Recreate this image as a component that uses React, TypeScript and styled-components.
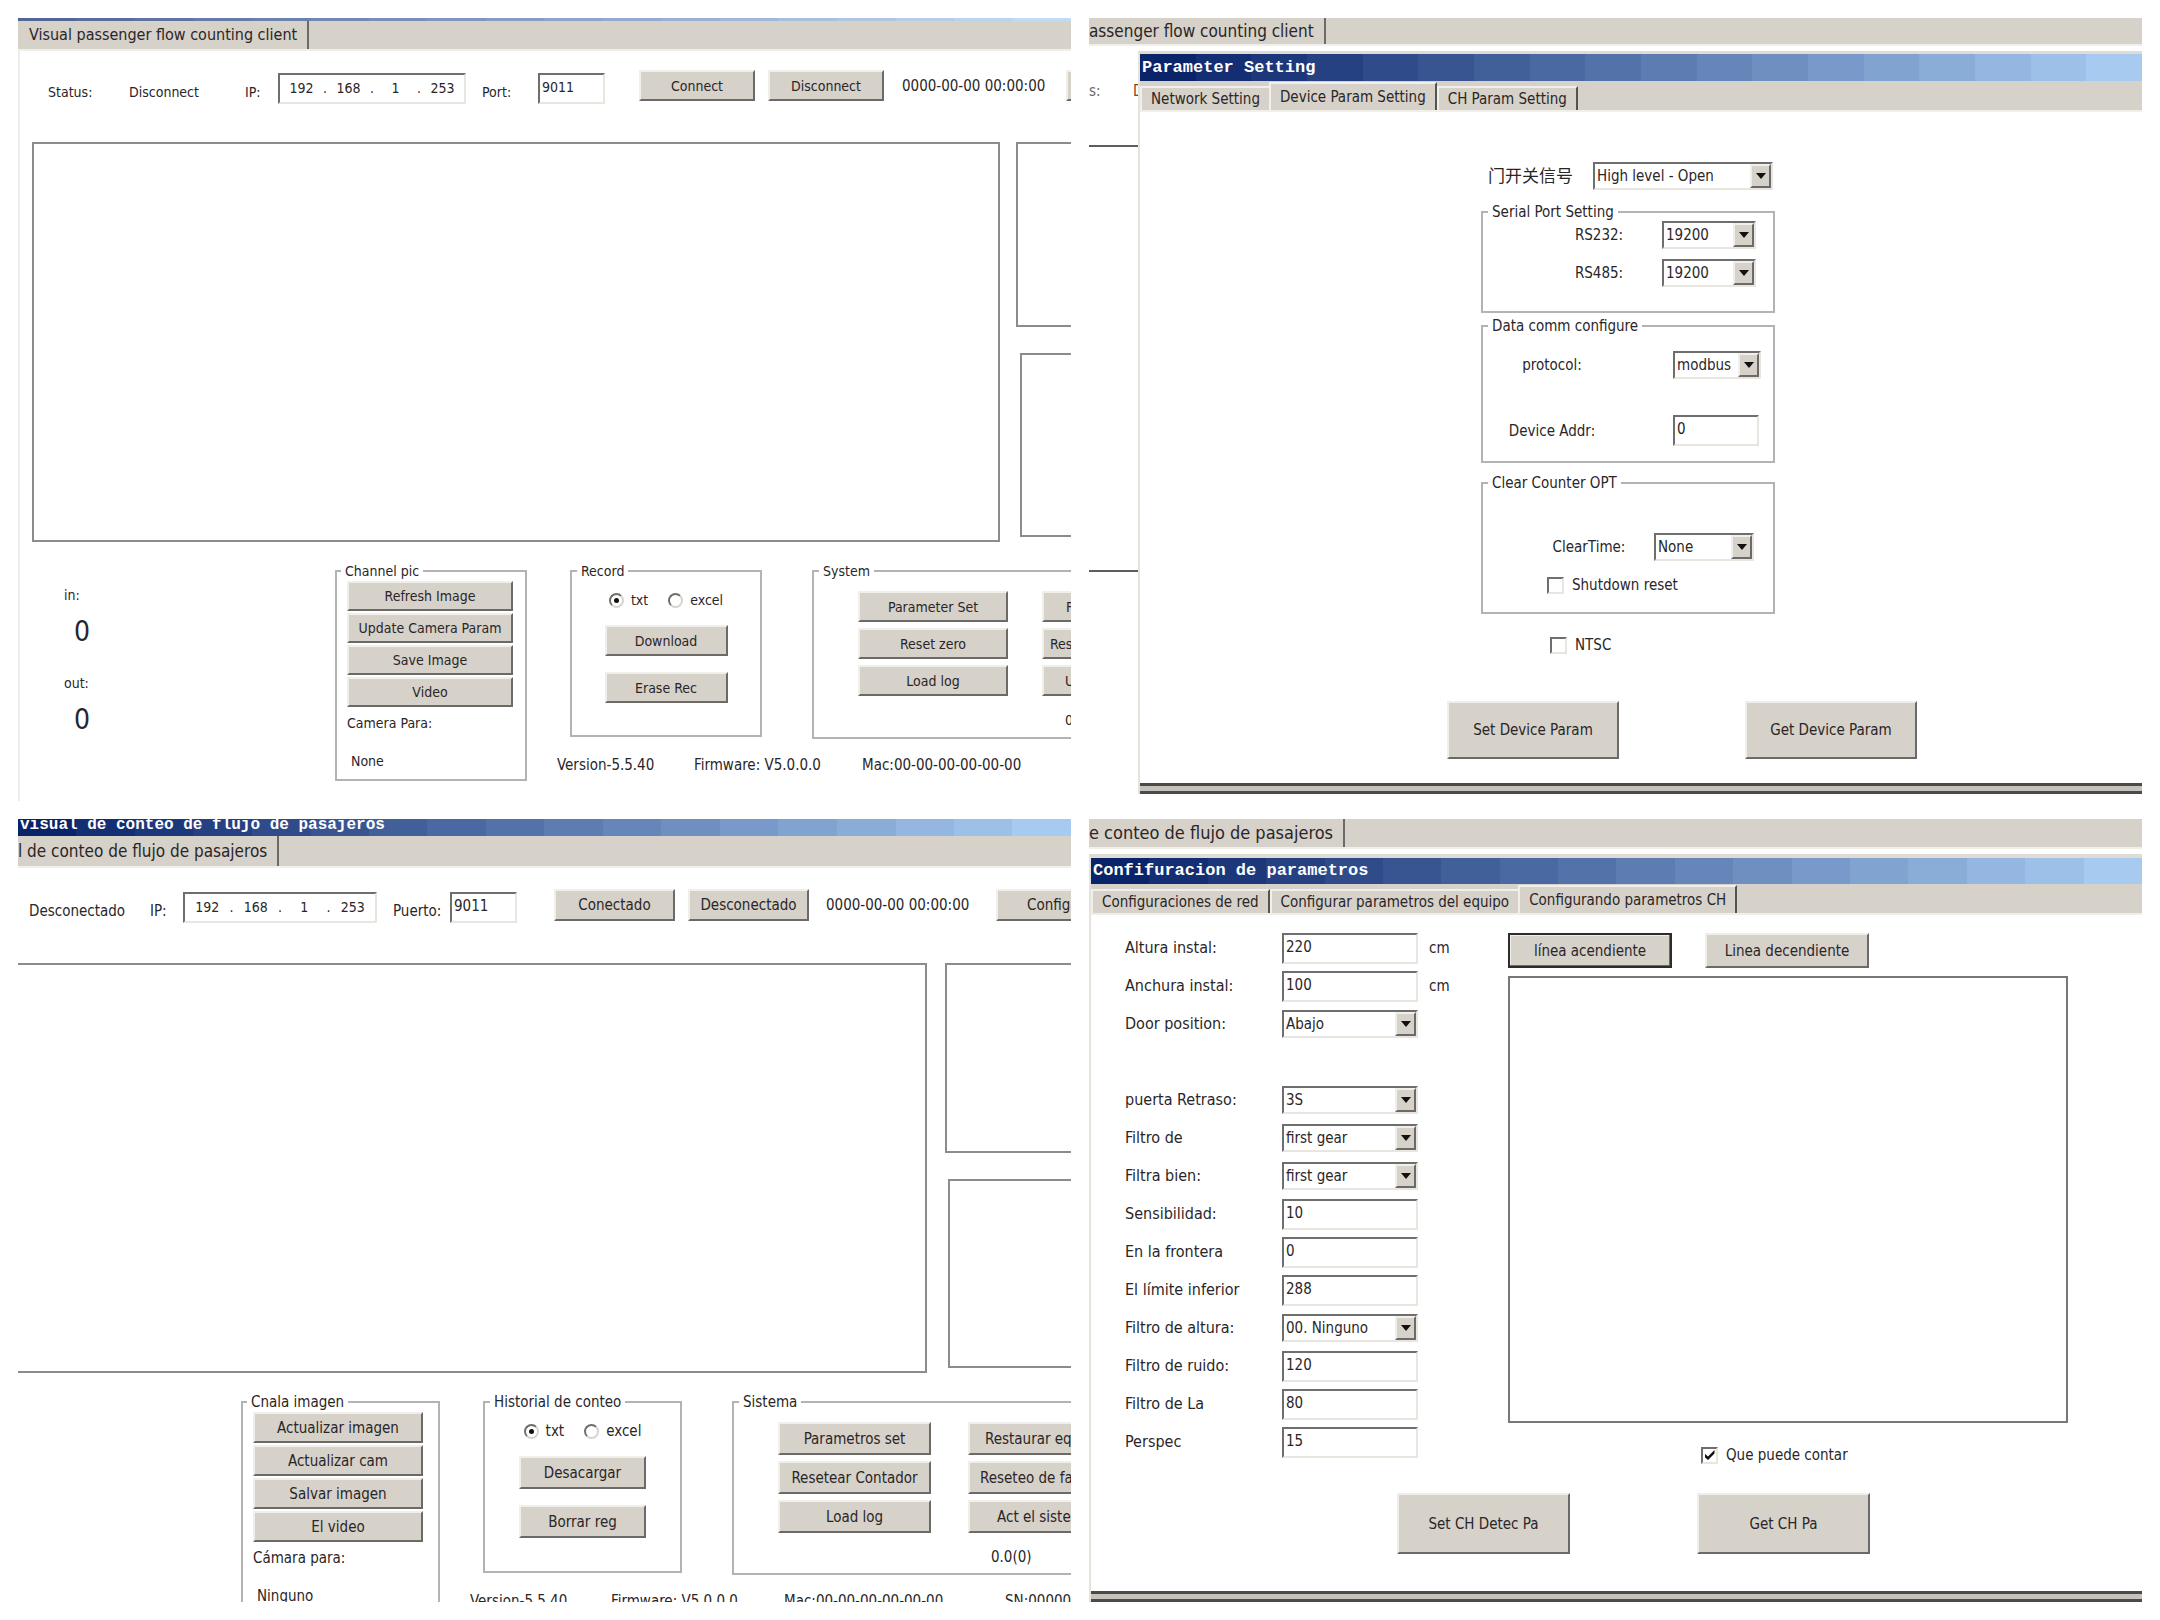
import React, { useId } from "react";
import styled, { createGlobalStyle, css } from "styled-components";

const face = "#d6d1c9";
const uiFont = '"DejaVu Sans Condensed", "Noto Sans", "Noto Sans CJK SC", sans-serif';

const Global = createGlobalStyle`
  *, *::before, *::after { box-sizing: border-box; }
  body { margin: 0; background: #fff; font: 14px/18px ${uiFont}; color: #2a2628; }
  button, input, select { font: inherit; color: inherit; }
`;

/* The caption bar is painted in flat bands, as on a 256-colour display. */
const bands = (count: number) => {
  const from = [10, 36, 106];
  const to = [166, 202, 240];
  const stops: string[] = [];
  for (let i = 0; i < count; i++) {
    const t = i / (count - 1);
    const c = from.map((v, k) => Math.round(v + (to[k] - v) * t)).join(",");
    stops.push(`rgb(${c}) ${(i * 100) / count}% ${((i + 1) * 100) / count}%`);
  }
  return `linear-gradient(90deg, ${stops.join(",")})`;
};

const raised = css`
  border: 2px solid;
  border-color: #f1efea #6b6a68 #6b6a68 #f1efea;
  background: ${face};
`;
const sunken = css`
  border: 2px solid;
  border-color: #6e6e6e #e9e6e0 #e9e6e0 #6e6e6e;
  background: #fff;
`;

const Board = styled.main`
  display: grid;
  grid-template-columns: repeat(2, minmax(0, 1fr));
  grid-template-rows: repeat(2, minmax(0, 1fr));
  gap: 18px;
  padding: 18px;
  height: 100vh;
`;
const Pane = styled.section<{ $edge?: boolean; $font: number }>`
  display: flex;
  flex-direction: column;
  overflow: hidden;
  white-space: nowrap;
  font-size: ${(p) => p.$font}px;
  box-shadow: ${(p) => (p.$edge ? "inset 2px 0 #efede9" : "none")};
`;
const Sliver = styled.div`
  flex: none;
  height: 3px;
  background: ${bands(18)};
  opacity: 0.7;
`;
const Caption = styled.header<{ $h: number; $cut?: boolean }>`
  flex: none;
  display: flex;
  align-items: center;
  height: ${(p) => p.$h}px;
  padding: 0 0 ${(p) => (p.$cut ? 6 : 0)}px 2px;
  background: ${bands(18)};
  color: #fff;
  font: bold ${(p) => (p.$cut ? 16 : 17)}px/18px "Liberation Mono", monospace;
`;
const TabStrip = styled.div<{ $h: number }>`
  flex: none;
  display: flex;
  align-items: flex-end;
  height: ${(p) => p.$h}px;
  background: ${face};
  border-bottom: 2px solid #f1efea;
`;
const MainTab = styled.button<{ $pad: number; $font: number }>`
  align-self: stretch;
  padding: 0 10px 0 ${(p) => p.$pad}px;
  border: 0;
  border-right: 2px solid #6b6a68;
  background: ${face};
  font-size: ${(p) => p.$font}px;
`;
const PageTab = styled.button<{ $active?: boolean; $last?: boolean }>`
  height: ${(p) => (p.$active ? 28 : 24)}px;
  padding: 0 9px;
  border: 0;
  border-top: 2px solid #f1efea;
  border-left: 2px solid #f1efea;
  border-right: ${(p) => (p.$active || p.$last ? "2px solid #55534f" : "0")};
  background: ${face};
  font-size: 15px;
`;

const Button = styled.button<{ $w?: number; $h: number; $start?: number; $default?: boolean }>`
  ${raised}
  flex: none;
  width: ${(p) => (p.$w ? `${p.$w}px` : "100%")};
  height: ${(p) => p.$h}px;
  padding: 0 0 0 ${(p) => p.$start ?? 0}px;
  text-align: ${(p) => (p.$start ? "left" : "center")};
  ${(p) => p.$default && css`border-color: #2c2c2c; box-shadow: inset -1px -1px #6b6a68, inset 1px 1px #f1efea;`}
`;
const TextBox = styled.input<{ $w: number }>`
  ${sunken}
  width: ${(p) => p.$w}px;
  height: 31px;
  padding: 0 0 3px 2px;
`;
const IpBox = styled.div`
  ${sunken}
  display: flex;
  align-items: center;
  height: 31px;
  padding-bottom: 2px;
  margin-top: 6px;
  font-size: 14px;
`;
const Octet = styled.input`
  flex: 1;
  min-width: 0;
  padding: 0;
  border: 0;
  background: none;
  text-align: center;
`;

const Group = styled.fieldset<{ $w?: number; $h: number; $pad?: number; $top?: number }>`
  flex: none;
  width: ${(p) => (p.$w ? `${p.$w}px` : "auto")};
  min-width: 0;
  height: ${(p) => p.$h}px;
  margin: ${(p) => p.$top ?? 0}px 0 0;
  padding: 0 ${(p) => p.$pad ?? 11}px;
  border: 2px solid #b3b3b3;
`;
const Legend = styled.legend`
  margin-left: -6px;
  padding: 0 4px;
`;

const Toolbar = styled.div<{ $h: number; $cols: string; $pad: number }>`
  flex: none;
  display: grid;
  grid-template-columns: ${(p) => p.$cols};
  align-items: center;
  height: ${(p) => p.$h}px;
  padding: 0 0 22px ${(p) => p.$pad}px;
`;
const BarLabel = styled.label<{ $in?: number }>`
  padding: 12px 0 0 ${(p) => p.$in ?? 0}px;
`;
const BarText = styled.span`
  padding-top: 12px;
`;
const PortBox = styled(TextBox)`
  margin-top: 6px;
`;
const Clock = styled.time`
  font-size: 15px;
`;

const Views = styled.div<{ $h: number; $pad: number; $gap: number }>`
  flex: none;
  display: flex;
  gap: ${(p) => p.$gap}px;
  height: ${(p) => p.$h}px;
  padding-left: ${(p) => p.$pad}px;
`;
const MainView = styled.div<{ $open: boolean }>`
  flex: 1;
  border: 2px solid #8c8c8c;
  ${(p) => p.$open && "border-left: 0;"}
`;
const SideViews = styled.div<{ $w: number }>`
  display: flex;
  flex-direction: column;
  gap: 26px;
  width: ${(p) => p.$w}px;
  padding-bottom: 5px;
`;
const SideView = styled.div<{ $in?: number }>`
  flex: 1;
  margin-left: ${(p) => p.$in ?? 0}px;
  border: 2px solid #8c8c8c;
  border-right: 0;
`;

const Bottom = styled.div`
  flex: none;
  display: flex;
  padding-top: 20px;
`;
const Counters = styled.dl<{ $w: number }>`
  flex: none;
  display: flex;
  flex-direction: column;
  gap: 24px;
  width: ${(p) => p.$w}px;
  margin: 0;
  padding: 24px 0 0 46px;
`;
const Counter = styled.div`
  dd { margin: 10px 0 0 10px; font-size: 28px; line-height: 36px; }
`;
const Stack = styled.div<{ $top: number; $gap: number; $center?: boolean }>`
  display: flex;
  flex-direction: column;
  align-items: ${(p) => (p.$center ? "center" : "stretch")};
  gap: ${(p) => p.$gap}px;
  padding-top: ${(p) => p.$top}px;
`;
const Note = styled.p<{ $top: number; $in?: number }>`
  margin: ${(p) => p.$top}px 0 0 ${(p) => p.$in ?? 0}px;
`;
const Columns = styled.div`
  flex: none;
  margin-left: 30px;
`;
const GroupRow = styled.div`
  display: flex;
  gap: 50px;
  padding-left: 13px;
`;
const SystemGrid = styled.div<{ $w: number; $gap: number }>`
  display: grid;
  grid-template-columns: repeat(2, ${(p) => p.$w}px);
  gap: 6px ${(p) => p.$gap}px;
  padding: 11px 0 0 33px;
`;
const Value = styled.output<{ $in: number }>`
  grid-column: 2;
  padding: 9px 0 0 ${(p) => p.$in}px;
`;
const Footer = styled.footer<{ $cols: string }>`
  display: grid;
  grid-template-columns: ${(p) => p.$cols};
  padding-top: 17px;
  font-size: 15px;
`;

const Choices = styled.div`
  display: flex;
  gap: 20px;
`;
const Choice = styled.label<{ $gap?: number }>`
  display: flex;
  align-items: center;
  gap: ${(p) => p.$gap ?? 7}px;
`;
const Radio = styled.input`
  appearance: none;
  display: grid;
  place-items: center;
  width: 15px;
  height: 15px;
  margin: 0;
  border: 2px solid;
  border-color: #6e6e6e #d6d3cd #d6d3cd #6e6e6e;
  border-radius: 50%;
  &:checked::before { content: ""; width: 5px; height: 5px; border-radius: 50%; background: #111; }
`;
const Tick = styled.input`
  ${sunken}
  appearance: none;
  display: grid;
  place-items: center;
  width: 17px;
  height: 17px;
  margin: 0;
  &:checked::before {
    content: "";
    width: 10px;
    height: 10px;
    background: #111;
    clip-path: polygon(0 35%, 35% 65%, 100% 0, 100% 35%, 35% 100%, 0 70%);
  }
`;

const Combo = styled.span<{ $w: number }>`
  ${sunken}
  position: relative;
  display: flex;
  width: ${(p) => p.$w}px;
  height: 28px;
  select { flex: 1; min-width: 0; appearance: none; border: 0; padding: 0 0 0 2px; background: none; }
`;
const Arrow = styled.span`
  ${raised}
  position: absolute;
  inset: 0 0 0 auto;
  display: grid;
  place-items: center;
  width: 21px;
  pointer-events: none;
`;

function Select({ id, value, w }: { id: string; value: string; w: number }) {
  return (
    <Combo $w={w}>
      <select id={id} defaultValue={value}>
        <option>{value}</option>
      </select>
      <Arrow aria-hidden>
        <svg width="10" height="6" viewBox="0 0 10 6">
          <path d="M0 0h10L5 6z" fill="#111" />
        </svg>
      </Arrow>
    </Combo>
  );
}

type ClientText = {
  strip: React.ReactNode;
  font: number;
  bar: { h: number; pad: number; cols: string };
  status?: string;
  state: string;
  port: string;
  connect: string;
  disconnect: string;
  more: string;
  button: [number, number];
  views: { h: number; pad: number; gap: number; side: number; shift: number };
  lead: React.ReactNode;
  picture: { title: string; actions: string[]; w: number; bw: number; h: number; bh: number; label: string; value: string };
  record: { title: string; actions: string[]; w: number; h: number; bw: number; bh: number };
  system: { title: string; bw: number; bh: number; gap: number; h: number; rows: [string, string, number][]; value: string; valueIn: number };
  footer: { cols: string; items: string[] };
};

function Client(t: ClientText) {
  const id = useId();
  return (
    <Pane $edge={!!t.status} $font={t.font}>
      {t.strip}
      <Toolbar $h={t.bar.h} $cols={t.bar.cols} $pad={t.bar.pad}>
        {t.status && <BarText>{t.status}</BarText>}
        <BarText>{t.state}</BarText>
        <BarLabel htmlFor={id + "ip"}>IP:</BarLabel>
        <IpBox>
          {["192", "168", "1", "253"].map((n, i) => (
            <React.Fragment key={n}>
              {i > 0 && <span>.</span>}
              <Octet id={i === 0 ? id + "ip" : undefined} aria-label={`IP ${i + 1}`} defaultValue={n} />
            </React.Fragment>
          ))}
        </IpBox>
        <BarLabel htmlFor={id + "port"} $in={16}>{t.port}</BarLabel>
        <PortBox id={id + "port"} $w={67} defaultValue="9011" />
        <Button $w={t.button[0]} $h={t.button[1]}>{t.connect}</Button>
        <Button $w={t.button[0]} $h={t.button[1]}>{t.disconnect}</Button>
        <Clock>0000-00-00 00:00:00</Clock>
        <Button $w={120} $h={t.button[1]} $start={29} aria-label="Config">{t.more}</Button>
      </Toolbar>
      <Views $h={t.views.h} $pad={t.views.pad} $gap={t.views.gap}>
        <MainView $open={!t.views.pad} />
        <SideViews $w={t.views.side}>
          <SideView />
          <SideView $in={t.views.shift} />
        </SideViews>
      </Views>
      <Bottom>
        {t.lead}
        <Group $w={t.picture.w} $h={t.picture.h} $pad={10}>
          <Legend>{t.picture.title}</Legend>
          <Stack $top={1} $gap={2}>
            {t.picture.actions.map((a) => (
              <Button key={a} $w={t.picture.bw} $h={t.picture.bh}>{a}</Button>
            ))}
          </Stack>
          <Note $top={7}>{t.picture.label}</Note>
          <Note $top={20} $in={4}>{t.picture.value}</Note>
        </Group>
        <Columns>
          <GroupRow>
            <Group $w={t.record.w} $h={t.record.h}>
              <Legend>{t.record.title}</Legend>
              <Stack $top={11} $gap={16} $center>
                <Choices>
                  <Choice><Radio type="radio" name={id + "f"} defaultChecked />txt</Choice>
                  <Choice><Radio type="radio" name={id + "f"} />excel</Choice>
                </Choices>
                {t.record.actions.map((a) => (
                  <Button key={a} $w={t.record.bw} $h={t.record.bh}>{a}</Button>
                ))}
              </Stack>
            </Group>
            <Group $w={420} $h={t.system.h}>
              <Legend>{t.system.title}</Legend>
              <SystemGrid $w={t.system.bw} $gap={t.system.gap}>
                {t.system.rows.map(([a, b, start]) => (
                  <React.Fragment key={a}>
                    <Button $h={t.system.bh}>{a}</Button>
                    <Button $h={t.system.bh} $start={start}>{b}</Button>
                  </React.Fragment>
                ))}
                <Value $in={t.system.valueIn}>{t.system.value}</Value>
              </SystemGrid>
            </Group>
          </GroupRow>
          <Footer $cols={t.footer.cols}>
            {t.footer.items.map((x) => <span key={x}>{x}</span>)}
          </Footer>
        </Columns>
      </Bottom>
    </Pane>
  );
}

/* Windows that open over the client */
const Behind = styled.div`
  flex: 1;
  display: flex;
  min-height: 0;
`;
const Peek = styled.div`
  width: 49px;
  overflow: hidden;
  color: #6f6a66;
`;
const PeekBar = styled.div`
  display: flex;
  align-items: center;
  justify-content: space-between;
  height: 99px;
  padding-bottom: 9px;
  i { font-style: normal; width: 5px; overflow: hidden; color: #8a3b2a; }
`;
const PeekView = styled.div`
  height: 427px;
  border: solid #5d5d5d;
  border-width: 2px 0;
`;
const Dialog = styled.section<{ $top: number; $bottom: number; $line: number }>`
  flex: 1;
  display: flex;
  flex-direction: column;
  margin: ${(p) => p.$top}px 0 ${(p) => p.$bottom}px;
  border-top: ${(p) => p.$line}px solid #dfdbd5;
  border-left: 2px solid #e6e3dd;
  background: #fff;
`;
const Sill = styled.div`
  flex: none;
  height: 11px;
  border: solid #4a4a48;
  border-width: 3px 0;
  background: #c5c2bb;
`;
const DeviceForm = styled.form`
  flex: 1;
  padding: 50px 0 0 341px;
`;
const DoorRow = styled.div`
  display: grid;
  grid-template-columns: 105px auto;
  justify-content: start;
  align-items: center;
  padding: 0 0 13px 7px;
  label { font-size: 17px; }
`;
const Groups = styled.div`
  display: flex;
  flex-direction: column;
  gap: 4px;
  width: 294px;
`;
const FieldRow = styled.div<{ $in: number; $label: number; $top: number }>`
  display: grid;
  grid-template-columns: ${(p) => p.$label}px auto;
  justify-content: start;
  align-items: center;
  padding: ${(p) => p.$top}px 0 0 ${(p) => p.$in}px;
  label { width: 92px; text-align: center; }
`;
const Indent = styled.div<{ $in: number; $top: number }>`
  padding: ${(p) => p.$top}px 0 0 ${(p) => p.$in}px;
`;
const DeviceActions = styled.div`
  display: flex;
  gap: 126px;
  margin: 47px 0 0 -34px;
`;

function DeviceWindow() {
  return (
    <Pane $font={15}>
      <TabStrip $h={28}><MainTab $pad={0} $font={17}>assenger flow counting client</MainTab></TabStrip>
      <Behind>
        <Peek>
          <PeekBar><span>s:</span><i>D</i></PeekBar>
          <PeekView />
        </Peek>
        <Dialog $top={5} $bottom={7} $line={3}>
          <Caption $h={27}>Parameter Setting</Caption>
          <TabStrip $h={31}>
            <PageTab>Network Setting</PageTab>
            <PageTab $active>Device Param Setting</PageTab>
            <PageTab $last>CH Param Setting</PageTab>
          </TabStrip>
          <DeviceForm onSubmit={(e) => e.preventDefault()}>
            <DoorRow>
              <label htmlFor="door">门开关信号</label>
              <Select id="door" value="High level - Open" w={180} />
            </DoorRow>
            <Groups>
              <Group $h={110}>
                <Legend>Serial Port Setting</Legend>
                <FieldRow $in={59} $label={109} $top={0}>
                  <label htmlFor="rs232">RS232:</label><Select id="rs232" value="19200" w={94} />
                </FieldRow>
                <FieldRow $in={59} $label={109} $top={10}>
                  <label htmlFor="rs485">RS485:</label><Select id="rs485" value="19200" w={94} />
                </FieldRow>
              </Group>
              <Group $h={146}>
                <Legend>Data comm configure</Legend>
                <FieldRow $in={12} $label={167} $top={16}>
                  <label htmlFor="proto">protocol:</label><Select id="proto" value="modbus" w={88} />
                </FieldRow>
                <FieldRow $in={12} $label={167} $top={36}>
                  <label htmlFor="addr">Device Addr:</label><TextBox id="addr" $w={86} defaultValue="0" />
                </FieldRow>
              </Group>
              <Group $h={140} $top={7}>
                <Legend>Clear Counter OPT</Legend>
                <FieldRow $in={49} $label={111} $top={41}>
                  <label htmlFor="clear">ClearTime:</label><Select id="clear" value="None" w={100} />
                </FieldRow>
                <Indent $in={53} $top={15}>
                  <Choice $gap={8}><Tick type="checkbox" />Shutdown reset</Choice>
                </Indent>
              </Group>
            </Groups>
            <Indent $in={69} $top={22}>
              <Choice $gap={8}><Tick type="checkbox" />NTSC</Choice>
            </Indent>
            <DeviceActions>
              <Button $w={172} $h={58}>Set Device Param</Button>
              <Button $w={172} $h={58}>Get Device Param</Button>
            </DeviceActions>
          </DeviceForm>
          <Sill />
        </Dialog>
      </Behind>
    </Pane>
  );
}

const ChannelForm = styled.form`
  flex: 1;
  display: grid;
  grid-template-columns: 382px minmax(0, 1fr);
  align-content: start;
  padding: 14px 74px 0 34px;
`;
const Rows = styled.div`
  display: grid;
  grid-auto-rows: 38px;
`;
const Row = styled.div`
  display: grid;
  grid-template-columns: 157px 147px auto;
  justify-content: start;
  align-items: center;
  label { font-size: 16px; }
`;
const Right = styled.div`
  display: flex;
  flex-direction: column;
  padding: 4px 0 0 1px;
`;
const LineButtons = styled.div`
  display: flex;
  gap: 33px;
  padding-bottom: 8px;
`;
const Canvas = styled.div`
  height: 447px;
  border: 2px solid #777;
`;
const ChannelActions = styled.div`
  grid-column: 1 / -1;
  display: flex;
  gap: 127px;
  padding: 29px 0 0 272px;
`;

const channelRows: ([string, string, "text" | "list", string?] | null)[] = [
  ["Altura instal:", "220", "text", "cm"],
  ["Anchura instal:", "100", "text", "cm"],
  ["Door position:", "Abajo", "list"],
  null,
  ["puerta Retraso:", "3S", "list"],
  ["Filtro de", "first gear", "list"],
  ["Filtra bien:", "first gear", "list"],
  ["Sensibilidad:", "10", "text"],
  ["En la frontera", "0", "text"],
  ["El límite inferior", "288", "text"],
  ["Filtro de altura:", "00. Ninguno", "list"],
  ["Filtro de ruido:", "120", "text"],
  ["Filtro de La", "80", "text"],
  ["Perspec", "15", "text"],
];

function ChannelWindow() {
  return (
    <Pane $font={15}>
      <TabStrip $h={30}><MainTab $pad={0} $font={18}>e conteo de flujo de pasajeros</MainTab></TabStrip>
      <Dialog $top={5} $bottom={0} $line={4}>
        <Caption $h={26}>Confifuracion de parametros</Caption>
        <TabStrip $h={31}>
          <PageTab $last>Configuraciones de red</PageTab>
          <PageTab>Configurar parametros del equipo</PageTab>
          <PageTab $active>Configurando parametros CH</PageTab>
        </TabStrip>
        <ChannelForm onSubmit={(e) => e.preventDefault()}>
          <Rows>
            {channelRows.map((r, i) =>
              r ? (
                <Row key={r[0]}>
                  <label htmlFor={`ch${i}`}>{r[0]}</label>
                  {r[2] === "list" ? (
                    <Select id={`ch${i}`} value={r[1]} w={136} />
                  ) : (
                    <TextBox id={`ch${i}`} $w={136} defaultValue={r[1]} />
                  )}
                  {r[3] && <span>{r[3]}</span>}
                </Row>
              ) : (
                <Row key="space" />
              )
            )}
          </Rows>
          <Right>
            <LineButtons>
              <Button $w={164} $h={35} $default>línea acendiente</Button>
              <Button $w={164} $h={35}>Linea decendiente</Button>
            </LineButtons>
            <Canvas />
            <Indent $in={193} $top={23}>
              <Choice $gap={8}><Tick type="checkbox" defaultChecked />Que puede contar</Choice>
            </Indent>
          </Right>
          <ChannelActions>
            <Button $w={173} $h={61}>Set CH Detec Pa</Button>
            <Button $w={173} $h={61}>Get CH Pa</Button>
          </ChannelActions>
        </ChannelForm>
        <Sill />
      </Dialog>
    </Pane>
  );
}

export default function App() {
  return (
    <>
      <Global />
      <Board>
        <Client
          strip={
            <>
              <Sliver />
              <TabStrip $h={30}><MainTab $pad={11} $font={16}>Visual passenger flow counting client</MainTab></TabStrip>
            </>
          }
          font={14}
          bar={{ h: 91, pad: 30, cols: "81px 116px 33px 188px 72px 101px 129px 134px 164px auto" }}
          status="Status:"
          state="Disconnect"
          port="Port:"
          connect="Connect"
          disconnect="Disconnect"
          more=""
          button={[116, 31]}
          views={{ h: 400, pad: 14, gap: 16, side: 55, shift: 4 }}
          lead={
            <Counters $w={317}>
              <Counter><dt>in:</dt><dd>0</dd></Counter>
              <Counter><dt>out:</dt><dd>0</dd></Counter>
            </Counters>
          }
          picture={{
            title: "Channel pic", w: 192, bw: 166, h: 219, bh: 30,
            actions: ["Refresh Image", "Update Camera Param", "Save Image", "Video"],
            label: "Camera Para:", value: "None",
          }}
          record={{ title: "Record", actions: ["Download", "Erase Rec"], w: 192, h: 175, bw: 123, bh: 31 }}
          system={{
            title: "System", bw: 150, bh: 31, gap: 34, h: 177, value: "0", valueIn: 23,
            rows: [["Parameter Set", "F", 22], ["Reset zero", "Res", 6], ["Load log", "U", 21]],
          }}
          footer={{ cols: "137px 168px auto", items: ["Version-5.5.40", "Firmware: V5.0.0.0", "Mac:00-00-00-00-00-00"] }}
        />
        <DeviceWindow />
        <Client
          strip={
            <>
              <Caption $h={17} $cut>visual de conteo de flujo de pasajeros</Caption>
              <TabStrip $h={32}><MainTab $pad={0} $font={17}>l de conteo de flujo de pasajeros</MainTab></TabStrip>
            </>
          }
          font={15}
          bar={{ h: 95, pad: 11, cols: "121px 33px 194px 73px 104px 134px 138px 170px auto" }}
          state="Desconectado"
          port="Puerto:"
          connect="Conectado"
          disconnect="Desconectado"
          more="Config"
          button={[121, 32]}
          views={{ h: 410, pad: 0, gap: 18, side: 126, shift: 3 }}
          lead={<Counters $w={223} />}
          picture={{
            title: "Cnala imagen", w: 199, bw: 170, h: 240, bh: 31,
            actions: ["Actualizar imagen", "Actualizar cam", "Salvar imagen", "El video"],
            label: "Cámara para:", value: "Ninguno",
          }}
          record={{ title: "Historial de conteo", actions: ["Desacargar", "Borrar reg"], w: 199, h: 180, bw: 127, bh: 33 }}
          system={{
            title: "Sistema", bw: 153, bh: 33, gap: 37, h: 182, value: "0.0(0)", valueIn: 23,
            rows: [["Parametros set", "Restaurar eq", 15], ["Resetear Contador", "Reseteo de fa", 10], ["Load log", "Act el siste", 27]],
          }}
          footer={{ cols: "141px 173px 221px auto", items: ["Version-5.5.40", "Firmware: V5.0.0.0", "Mac:00-00-00-00-00-00", "SN:00000000"] }}
        />
        <ChannelWindow />
      </Board>
    </>
  );
}
